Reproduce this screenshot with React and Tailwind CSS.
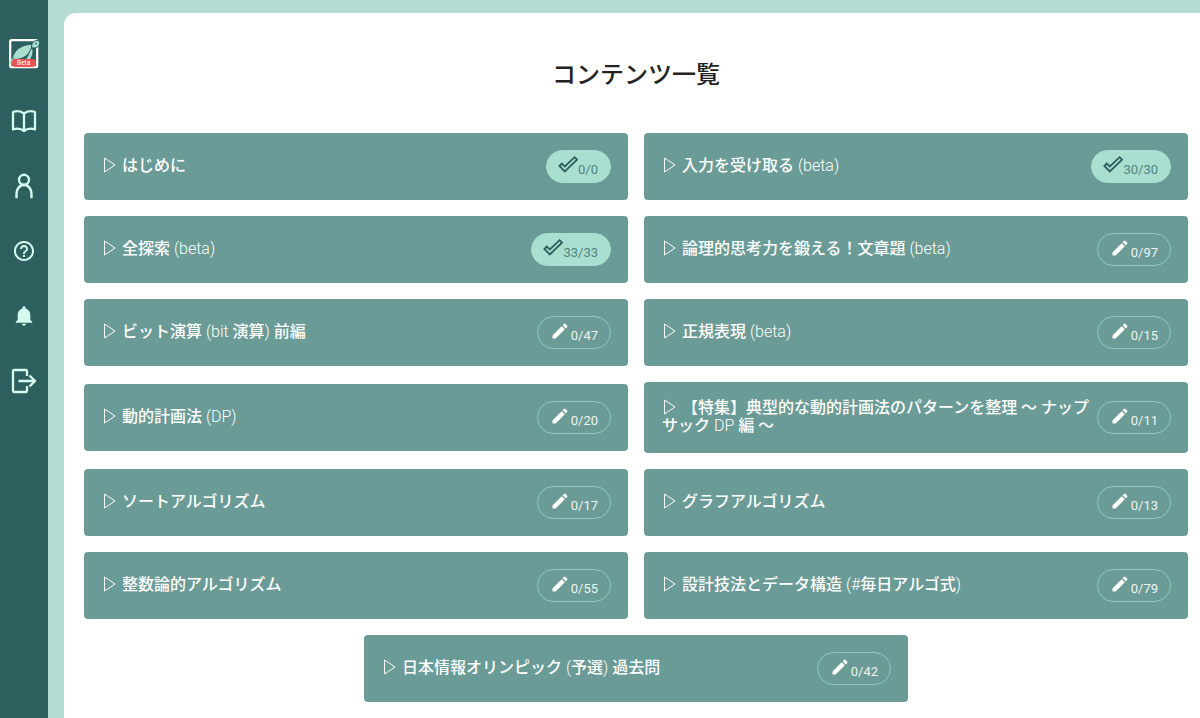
import React from 'react';
import { MdEdit, MdHelpOutline } from 'react-icons/md';
import { IoMdNotifications } from 'react-icons/io';

const contents = [
    { title: 'はじめに', solved: 0, total: 0 },
    { title: '入力を受け取る (beta)', solved: 30, total: 30 },
    { title: '全探索 (beta)', solved: 33, total: 33 },
    { title: '論理的思考力を鍛える！文章題 (beta)', solved: 0, total: 97 },
    { title: 'ビット演算 (bit 演算) 前編', solved: 0, total: 47 },
    { title: '正規表現 (beta)', solved: 0, total: 15 },
    { title: '動的計画法 (DP)', solved: 0, total: 20 },
    { title: '【特集】典型的な動的計画法のパターンを整理 〜 ナップサック DP 編 〜', solved: 0, total: 11 },
    { title: 'ソートアルゴリズム', solved: 0, total: 17 },
    { title: 'グラフアルゴリズム', solved: 0, total: 13 },
    { title: '整数論的アルゴリズム', solved: 0, total: 55 },
    { title: '設計技法とデータ構造 (#毎日アルゴ式)', solved: 0, total: 79 },
    { title: '日本情報オリンピック (予選) 過去問', solved: 0, total: 42 },
];

const Logo = () => (
    <svg viewBox="0 0 32 32" className="w-8 h-8" role="img" aria-label="Beta">
        <rect x="2.200" y="2.200" width="27" height="27" rx="1.5" fill="#2d5f5f" stroke="#fff" strokeWidth="2.200" />
        <path d="M1.200 25.500C1.500 22.500 3.500 20.500 6 19.500L8 24Z" fill="#a9dfd0" />
        <path d="M4.500 20.500C5.500 12.500 13 6.500 24 6.300C23.500 14 18.500 19.500 10.500 21.200C8 21.600 6 21.400 4.500 20.500Z" fill="#a9dfd0" stroke="#2d5f5f" strokeWidth="1" />
        <path d="M17.500 21.500C20.500 18 21 13 24.200 9.500C26 13.500 24.500 18.500 22 22Z" fill="#a9dfd0" stroke="#2d5f5f" strokeWidth="1" />
        <path d="M23.500 9C23.500 4.500 26.500 2 30.500 2.500C32.500 4.500 31.500 8.500 28 9.800C26.500 10.300 25 10 23.500 9Z" fill="#a9dfd0" stroke="#2d5f5f" strokeWidth="1" />
        <circle cx="28" cy="5.600" r="0.900" fill="#2d5f5f" />
        <rect x="3.500" y="21" width="24.500" height="8" rx="4" fill="#ee5252" />
        <text x="15.700" y="27.300" textAnchor="middle" fontSize="6.500" fontWeight="400" fill="#fff" fontFamily="Roboto, sans-serif">Beta</text>
    </svg>
);

const BookIcon = () => (
    <svg viewBox="0 0 26 24" className="w-[26px] h-6" fill="none" stroke="currentColor" strokeWidth="2.300">
        <path d="M13 4.500C10 2 5.500 1.800 2 3V20.500C5.500 19.300 10 19.500 13 22C16 19.500 20.500 19.300 24 20.500V3C20.500 1.800 16 2 13 4.500ZM13 4.500V22" strokeLinejoin="round" />
    </svg>
);

const PersonIcon = () => (
    <svg viewBox="0 0 20 26" className="w-5 h-[26px]" fill="none" stroke="currentColor" strokeWidth="2.400">
        <circle cx="10" cy="6.800" r="5" />
        <path d="M2.500 25.200V21C2.500 16 5.500 12 10 12S17.500 16 17.500 21V25.200" />
    </svg>
);

const ExitIcon = () => (
    <svg viewBox="0 0 26 26" className="w-[26px] h-[26px]" fill="none" stroke="currentColor" strokeWidth="2.300">
        <path d="M16 8V3.200C16 2.400 15.600 2 14.800 2H3.200C2.400 2 2 2.400 2 3.200V22.800C2 23.600 2.400 24 3.200 24H14.800C15.600 24 16 23.600 16 22.800V18" />
        <path d="M7.500 13H24M18.500 7.500L24 13L18.500 18.500" />
    </svg>
);

const CheckIcon = () => (
    <svg viewBox="0 0 20 20" className="w-5 h-5" fill="none" stroke="#2d5f5f" strokeWidth="1.800">
        <path d="M1.400 11L3.800 8.600L6.800 11.400L16.600 2.200L19 4.600L6.800 16.400Z" />
    </svg>
);

const Triangle = () => (
    <svg viewBox="0 0 14 16" className="inline-block w-3.5 h-4 mr-1.5 -mt-1" fill="none" stroke="currentColor">
        <path d="M2.500 1L13 8L2.500 15Z" />
    </svg>
);

const navItems = [
    { label: 'コンテンツ', icon: <BookIcon /> },
    { label: 'マイページ', icon: <PersonIcon /> },
    { label: 'ヘルプ', icon: <MdHelpOutline size={24} /> },
    { label: 'お知らせ', icon: <IoMdNotifications size={24} /> },
    { label: 'ログアウト', icon: <ExitIcon /> },
];

const Sidebar = () => (
    <nav className="w-12 shrink-0 bg-[#2d5f5f] text-[#d4fbee] flex flex-col items-center pt-[38px]">
        <a href="#" className="mb-[18px]">
            <Logo />
        </a>
        {navItems.map((item) => (
            <a
                key={item.label}
                href="#"
                aria-label={item.label}
                className="w-full h-[65px] flex items-center justify-center"
            >
                {item.icon}
            </a>
        ))}
    </nav>
);

// Latin letters and brackets are set lighter than the Japanese text
const Title = ({ text }) =>
    text.split(/([\x20-\x7e]+)/).map((part, i) =>
        i % 2 === 1 ? (
            <span key={i} className="font-light">
                {part}
            </span>
        ) : (
            part
        )
    );

const Progress = ({ solved, total }) => {
    const done = solved === total;

    return (
        <span
            className={`shrink-0 h-[33px] flex items-start rounded-full border pl-[11px] pr-3 pt-1 ${
                done
                    ? 'bg-[#a9dfd0] border-[#a9dfd0] text-[#55827f]'
                    : 'border-[#8fcabd] text-[#eef6f4]'
            }`}
        >
            {done ? <CheckIcon /> : <MdEdit size={20} className="ml-px mr-px text-white" />}
            <span className="text-[13px] leading-5 font-normal pt-[5px]">
                {solved}/{total}
            </span>
        </span>
    );
};

const ContentCard = ({ title, solved, total }) => (
    <button
        type="button"
        className="w-[calc(50%-8px)] py-[17px] pl-[18px] pr-[17px] flex items-center justify-between rounded bg-[#6a9b96] text-white text-left"
    >
        <span className="text-base leading-[18px] font-medium pb-px">
            <Triangle />
            <Title text={title} />
        </span>
        <Progress solved={solved} total={total} />
    </button>
);

const App = () => {
    return (
        <div className="min-h-screen flex bg-[#b5dcd3] font-light font-['Roboto','Noto_Sans_CJK_JP',sans-serif]">
            <Sidebar />
            <main className="flex-1 min-w-0 ml-4 mt-[13px] pl-5 pr-3 pt-11 pb-4 rounded-tl-xl bg-white">
                <h1 className="mb-10 text-2xl leading-9 font-medium text-center text-[#222222]">
                    コンテンツ一覧
                </h1>
                <div className="flex flex-wrap items-center justify-center gap-4">
                    {contents.map((content) => (
                        <ContentCard key={content.title} {...content} />
                    ))}
                </div>
            </main>
        </div>
    );
};

export default App;
